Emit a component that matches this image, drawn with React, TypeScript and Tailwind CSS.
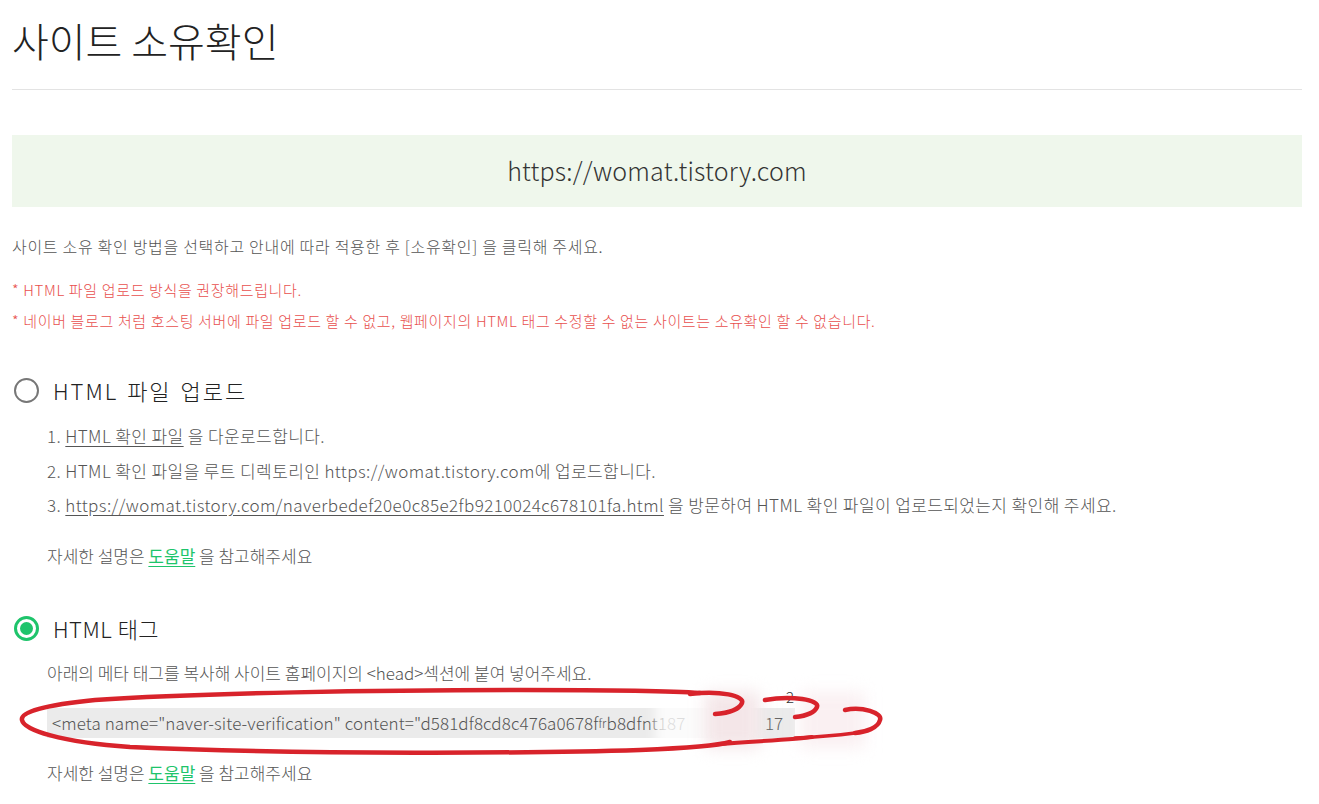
import React from "react";

const font = {
  fontFamily: '"Noto Sans CJK KR", "Noto Sans", sans-serif',
};

function Radio({ checked }: { checked?: boolean }) {
  if (checked) {
    return (
      <span className="flex h-[25px] w-[25px] items-center justify-center rounded-full border-[3px] border-[#1ec46b] bg-white">
        <span className="h-[13px] w-[13px] rounded-full bg-[#1ec46b]" />
      </span>
    );
  }
  return <span className="block h-[25px] w-[25px] rounded-full border-2 border-[#777]" />;
}

export default function App() {
  return (
    <div className="relative h-[804px] w-[1319px] overflow-hidden bg-white font-light text-[#555]" style={font}>
      <div className="px-[12px]">
        <h1 className="pt-[12px] text-[40px] leading-[56px] font-light text-[#222]">사이트 소유확인</h1>
        <div className="mt-[21px] mr-[5px] h-px bg-[#e3e3e3]" />
        <div className="mt-[45px] mr-[5px] flex h-[72px] items-center justify-center bg-[#eff7ec] text-[25px] tracking-[0.2px] font-light text-[#333]">
          https://womat.tistory.com
        </div>
        <p className="mt-[28px] text-[16px] leading-[22px] tracking-[0.7px] text-[#555]">
          사이트 소유 확인 방법을 선택하고 안내에 따라 적용한 후 [소유확인] 을 클릭해 주세요.
        </p>
        <div className="mt-[17px] text-[15px] leading-[31px] tracking-[0.65px] text-[#e8504e]">
          <p>* HTML 파일 업로드 방식을 권장해드립니다.</p>
          <p>* 네이버 블로그 처럼 호스팅 서버에 파일 업로드 할 수 없고, 웹페이지의 HTML 태그 수정할 수 없는 사이트는 소유확인 할 수 없습니다.</p>
        </div>

        <div className="mt-[39px] flex items-center gap-[14px] pl-[2px]">
          <Radio />
          <span className="text-[22px] leading-[30px] tracking-[2px] text-[#222] [word-spacing:2px]">HTML 파일 업로드</span>
        </div>
        <div className="mt-[14px] pl-[35px] text-[17px] leading-[34.5px] tracking-[0.4px] text-[#555]">
          <p>
            1. <span className="underline underline-offset-[3px]">HTML 확인 파일</span> 을 다운로드합니다.
          </p>
          <p>2. HTML 확인 파일을 루트 디렉토리인 https://womat.tistory.com에 업로드합니다.</p>
          <p>
            3.{" "}
            <span className="underline underline-offset-[3px]">
              https://womat.tistory.com/naverbedef20e0c85e2fb9210024c678101fa.html
            </span>{" "}
            을 방문하여 HTML 확인 파일이 업로드되었는지 확인해 주세요.
          </p>
          <p className="mt-[16px] tracking-normal">
            자세한 설명은 <span className="font-normal text-[#1ec46b] underline underline-offset-[3px]">도움말</span> 을 참고해주세요
          </p>
        </div>

        <div className="mt-[40px] flex items-center gap-[14px] pl-[2px]">
          <Radio checked />
          <span className="text-[22px] leading-[30px] tracking-[0.5px] text-[#222]">HTML 태그</span>
        </div>
        <div className="mt-[18px] pl-[35px] text-[17px] text-[#555]">
          <p className="leading-[24px]">아래의 메타 태그를 복사해 사이트 홈페이지의 &lt;head&gt;섹션에 붙여 넣어주세요.</p>
          <div className="mt-[23px] flex h-[30px] w-[748px] items-center bg-[#ebebeb] pl-[5px] leading-[30px] tracking-[0.1px]">
            &lt;meta name="naver-site-verification" content="d581df8cd8c476a0678f<span className="text-[12px]">fr</span>b8dfnt187
          </div>
          <p className="mt-[23px] leading-[24px]">
            자세한 설명은 <span className="font-normal text-[#1ec46b] underline underline-offset-[3px]">도움말</span> 을 참고해주세요
          </p>
        </div>
      </div>

      {/* blur patches */}
      <div className="absolute left-[655px] top-[692px] h-[56px] w-[100px] bg-white/80 blur-[6px]" />
      <div className="absolute left-[705px] top-[692px] h-[56px] w-[55px] bg-[#f4e6e8] blur-[8px]" />
      <div className="absolute left-[800px] top-[692px] h-[56px] w-[65px] bg-[#faf0f2] blur-[8px]" />
      <div className="absolute left-[765px] top-[710px] text-[17px] text-[#666]">17</div>
      <div className="absolute left-[786px] top-[686px] text-[15px] text-[#333]">2</div>

      {/* red hand-drawn ellipse */}
      <svg className="pointer-events-none absolute left-0 top-0" width="1319" height="804" viewBox="0 0 1319 804">
        <g fill="none" stroke="#d8232b" strokeWidth="4.5" strokeLinecap="round">
          <path d="M700 693 C 660 690, 600 690, 520 690 C 380 690, 200 693, 95 700 C 45 705, 20 712, 22 720 C 24 730, 60 742, 130 747 C 300 755, 550 753, 640 750 C 690 748, 720 745, 730 742" />
          <path d="M690 694 C 720 690, 745 696, 742 703 C 739 710, 728 713, 715 714" />
          <path d="M765 700 C 792 695, 820 700, 817 707 C 814 714, 805 716, 795 717" />
          <path d="M845 710 C 862 706, 883 713, 880 720 C 878 728, 866 732, 855 733" />
          <path d="M720 744 C 760 741, 800 739, 812 737" strokeWidth="4" />
          <path d="M795 738 C 820 737, 840 735, 855 733" strokeWidth="3.5" />
        </g>
      </svg>
    </div>
  );
}
